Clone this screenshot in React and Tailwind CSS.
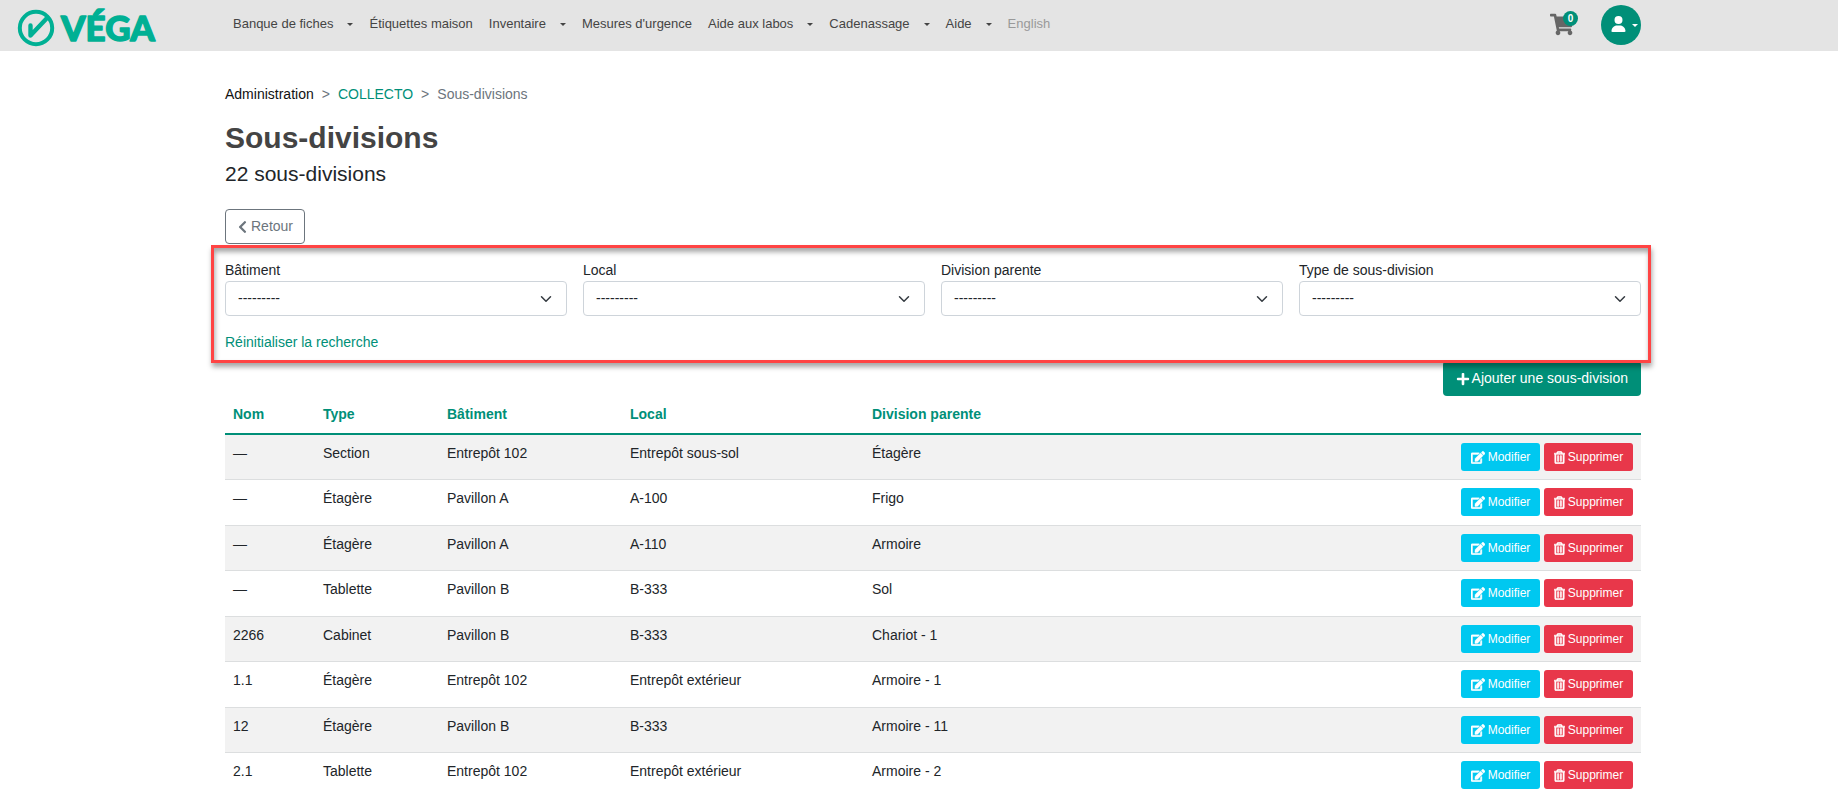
import { FaChevronLeft, FaPlus, FaEdit, FaRegTrashAlt, FaShoppingCart } from "react-icons/fa";
import { FaUser } from "react-icons/fa6";

const navItems = [
  { label: "Banque de fiches", menu: true },
  { label: "Étiquettes maison" },
  { label: "Inventaire", menu: true },
  { label: "Mesures d'urgence" },
  { label: "Aide aux labos", menu: true },
  { label: "Cadenassage", menu: true },
  { label: "Aide", menu: true },
  { label: "English", muted: true },
];

const filters = [
  { id: "batiment", label: "Bâtiment" },
  { id: "local", label: "Local" },
  { id: "division", label: "Division parente" },
  { id: "type", label: "Type de sous-division" },
];

const rows = [
  ["—", "Section", "Entrepôt 102", "Entrepôt sous-sol", "Étagère"],
  ["—", "Étagère", "Pavillon A", "A-100", "Frigo"],
  ["—", "Étagère", "Pavillon A", "A-110", "Armoire"],
  ["—", "Tablette", "Pavillon B", "B-333", "Sol"],
  ["2266", "Cabinet", "Pavillon B", "B-333", "Chariot - 1"],
  ["1.1", "Étagère", "Entrepôt 102", "Entrepôt extérieur", "Armoire - 1"],
  ["12", "Étagère", "Pavillon B", "B-333", "Armoire - 11"],
  ["2.1", "Tablette", "Entrepôt 102", "Entrepôt extérieur", "Armoire - 2"],
];

function Caret({ className = "" }) {
  return (
    <svg viewBox="0 0 6 3" className={`h-[3px] w-[6px] ${className}`} aria-hidden="true">
      <path d="M0 0H6L3 3Z" fill="currentColor" />
    </svg>
  );
}

function Logo() {
  return (
    <a href="#accueil" aria-label="VÉGA" className="block">
      <svg width="180" height="51" viewBox="0 0 180 51" className="text-[#00b094]">
        <circle cx="36" cy="28" r="16.2" fill="none" stroke="currentColor" strokeWidth="4" />
        <path d="M30.5 25.5V35.5L47.5 17.5" fill="none" stroke="currentColor" strokeWidth="4.4" strokeLinecap="round" strokeLinejoin="round" />
        <text x="61" y="41" fill="currentColor" stroke="currentColor" strokeWidth="1.4" strokeLinejoin="round" className="font-['Lato'] text-[35px] font-black">VÉGA</text>
      </svg>
    </a>
  );
}

function Header() {
  return (
    <header className="flex h-[51px] bg-[#e4e4e4] pr-[197px]">
      <div className="w-[225px] shrink-0">
        <Logo />
      </div>
      <nav className="flex grow pt-3 text-[13px] leading-6 text-[#444]">
        {navItems.map((item) => (
          <a key={item.label} href="#menu" className={`flex h-6 items-center whitespace-nowrap px-2 ${item.muted ? "text-[#999]" : ""}`}>
            {item.label}
            {item.menu && <Caret className="ml-[14px]" />}
          </a>
        ))}
      </nav>
      <div className="flex items-start gap-[27px] pt-[5px]">
        <a href="#panier" aria-label="Panier" className="relative mt-2 block text-[#666]">
          <FaShoppingCart className="h-[23px] w-[24px]" />
          <span className="absolute -right-1 -top-[2px] flex size-[15px] items-center justify-center rounded-full bg-[#008f78] text-[10px] font-bold text-white">0</span>
        </a>
        <button type="button" aria-label="Mon compte" className="flex size-10 items-center justify-end gap-[6px] rounded-full bg-[#008f78] pb-[2px] pr-[3px] text-white">
          <FaUser className="h-4 w-[15px]" />
          <Caret className="mt-[3px]" />
        </button>
      </div>
    </header>
  );
}

function Filter({ id, label }) {
  return (
    <div className="flex min-w-0 flex-col">
      <label htmlFor={id} className="h-[21px]">{label}</label>
      <div className="relative">
        <select id={id} className="h-[35px] w-full appearance-none rounded-[4px] border border-[#ced4da] bg-white px-3">
          <option>---------</option>
        </select>
        <svg viewBox="0 0 16 16" className="pointer-events-none absolute right-[15px] top-3 size-3" aria-hidden="true">
          <path d="M2 5l6 6 6-6" fill="none" stroke="#343a40" strokeWidth="2" strokeLinecap="round" strokeLinejoin="round" />
        </svg>
      </div>
    </div>
  );
}

export default function App() {
  return (
    <div className="min-h-screen bg-white font-['Liberation_Sans',Arial,sans-serif] text-[14px] leading-[21px] text-[#212529]">
      <Header />
      <main className="pl-[225px] pr-[197px] pt-[33px]">
        <nav aria-label="Fil d'Ariane" className="flex gap-2 text-[#6c757d]">
          <a href="#administration" className="text-[#111]">Administration</a>
          <span>&gt;</span>
          <a href="#collecto" className="text-[#008f78]">COLLECTO</a>
          <span>&gt;</span>
          <span>Sous-divisions</span>
        </nav>
        <h1 className="mt-[15px] text-[30px] font-bold leading-9 text-[#444]">Sous-divisions</h1>
        <p className="mt-1 text-[21px] leading-[28px]">22 sous-divisions</p>
        <a href="#retour" className="mt-[21px] flex h-[35px] w-fit items-center gap-1 rounded-[4px] border border-[#6c757d] pl-3 pr-[11px] text-[#6c757d]">
          <FaChevronLeft className="h-[14px] w-[9px]" />
          Retour
        </a>
        <form className="relative z-10 -ml-[14px] -mr-[10px] mt-px flex h-[118px] flex-col border-[3px] border-[#ff4444] pl-[11px] pr-[7px] pt-3 shadow-[1px_4px_5px_rgba(0,0,0,0.35),inset_1px_4px_5px_rgba(0,0,0,0.35)]">
          <div className="grid grid-cols-4 gap-4">
            {filters.map((f) => (
              <Filter key={f.id} {...f} />
            ))}
          </div>
          <a href="#reinitialiser" className="mt-4 w-fit text-[#008f78]">Réinitialiser la recherche</a>
        </form>
        <div className="-mt-[2px] flex justify-end">
          <a href="#ajouter" className="flex h-[35px] items-center gap-[2px] rounded-[4px] bg-[#008f78] px-[13px] text-white">
            <FaPlus className="size-[14px]" />
            Ajouter une sous-division
          </a>
        </div>
        <table className="w-full table-fixed border-separate border-spacing-0 text-left">
          <colgroup>
            <col className="w-[90px]" />
            <col className="w-[124px]" />
            <col className="w-[183px]" />
            <col className="w-[242px]" />
            <col />
            <col className="w-[188px]" />
          </colgroup>
          <thead>
            <tr className="text-[#008f78]">
              {["Nom", "Type", "Bâtiment", "Local", "Division parente"].map((h) => (
                <th key={h} scope="col" className="h-[39px] border-b-2 border-[#008f78] px-2 font-bold">{h}</th>
              ))}
              <td className="border-b-2 border-[#008f78]" />
            </tr>
          </thead>
          <tbody>
            {rows.map((row, i) => (
              <tr key={i} className="odd:h-[45px] odd:bg-[#f2f2f2] even:h-[46px]">
                {row.map((cell, j) => (
                  <td key={j} className="border-b border-[#dcdedf] px-2 pt-2 align-top">{cell}</td>
                ))}
                <td className="border-b border-[#dcdedf] px-2 pt-2 align-top">
                  <div className="flex justify-end gap-1 text-[12px] font-medium leading-[18px] text-white">
                    <button type="button" className="flex h-7 w-[79px] items-center justify-center gap-[3px] rounded-[3px] bg-[#00c8f0]">
                      <FaEdit className="h-[13px] w-[14px] stroke-[16]" />
                      Modifier
                    </button>
                    <button type="button" className="flex h-7 w-[89px] items-center justify-center gap-[3px] rounded-[3px] bg-[#e8374a]">
                      <FaRegTrashAlt className="h-[13px] w-[11px] stroke-[24]" />
                      Supprimer
                    </button>
                  </div>
                </td>
              </tr>
            ))}
          </tbody>
        </table>
      </main>
    </div>
  );
}
